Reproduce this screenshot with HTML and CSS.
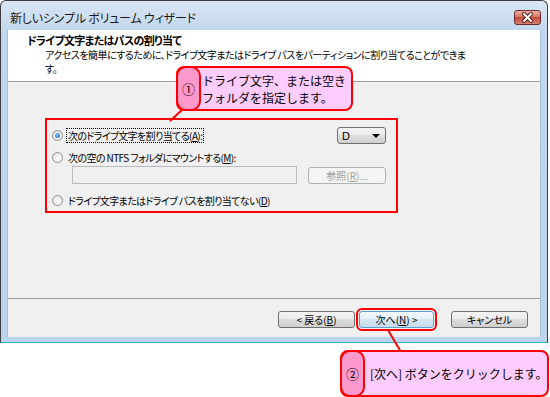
FILE: index.html
```html
<!DOCTYPE html>
<html lang="ja">
<head>
  <meta charset="UTF-8">
  <title>新しいシンプル ボリューム ウィザード</title>
  <link rel="stylesheet" href="styles.css">
</head>
<body>
  <div class="window">
    <div class="titlebar">
      <span class="title">新しいシンプル ボリューム ウィザード</span>
      <span class="close">
        <svg width="25" height="13" viewBox="0 0 25 13">
          <path d="M9 3 L16 10 M16 3 L9 10" stroke="#5a2020" stroke-width="4" stroke-linecap="round"/>
          <path d="M9 3 L16 10 M16 3 L9 10" stroke="#ffffff" stroke-width="2" stroke-linecap="round"/>
        </svg>
      </span>
    </div>
    <div class="client">
      <div class="header">
        <div class="h-title">ドライブ文字またはパスの割り当て</div>
        <div class="h-desc">アクセスを簡単にするために、ドライブ文字またはドライブ パスをパーティションに割り当てることができま<br>す。</div>
      </div>
      <div class="body">
        <div class="options">
          <div class="row row-a">
            <span class="radio on"></span>
            <span class="label focus">次のドライブ文字を割り当てる(<u>A</u>):</span>
            <span class="combo">D<span class="arrow"></span></span>
          </div>
          <div class="row row-b">
            <span class="radio"></span>
            <span class="label">次の空の NTFS フォルダにマウントする(<u>M</u>):</span>
          </div>
          <div class="row row-c">
            <span class="field"></span>
            <span class="btn disabled">参照(<u>R</u>)...</span>
          </div>
          <div class="row row-d">
            <span class="radio"></span>
            <span class="label">ドライブ文字またはドライブ パスを割り当てない(<u>D</u>)</span>
          </div>
        </div>
      </div>
      <div class="footer">
        <span class="btn back">&lt; 戻る(<u>B</u>)</span>
        <span class="btn next mark">次へ(<u>N</u>) &gt;</span>
        <span class="btn cancel">キャンセル</span>
      </div>
    </div>
  </div>

  <!-- annotations -->
  <svg class="pointers" width="550" height="397">
    <line x1="184" y1="108" x2="170" y2="121" stroke="#ff0000" stroke-width="2"/>
    <line x1="388" y1="330" x2="401" y2="352" stroke="#ff0000" stroke-width="2"/>
  </svg>
  <div class="callout c1">
    <span class="num">①</span>
    <span class="text">ドライブ文字、または空き<br>フォルダを指定します。</span>
  </div>
  <div class="callout c2">
    <span class="num">②</span>
    <span class="text">[次へ] ボタンをクリックします。</span>
  </div>
</body>
</html>
```

FILE: styles.css
```css
html, body {
  margin: 0;
  padding: 0;
  background: #ffffff;
  width: 550px;
  height: 397px;
  overflow: hidden;
  position: relative;
  font-family: "Noto Sans CJK JP", "Noto Sans", sans-serif;
  font-size: 10px;
  color: #000;
}
.window {
  width: 548px;
  height: 343px;
  box-sizing: border-box;
  border: 1px solid #3d3d3d;
  border-bottom-color: #2cb3d6;
  border-radius: 6px 6px 0 0;
  background: linear-gradient(#d9e6f4, #c2d7ee 30px, #bcd3ec);
  display: flex;
  flex-direction: column;
}
.titlebar {
  height: 29px;
  display: flex;
  justify-content: space-between;
  align-items: flex-start;
  padding: 0 6px 0 9px;
}
.title {
  font-size: 12px;
  line-height: 14px;
  margin-top: 10px;
  color: #1a1a1a;
  font-feature-settings: "palt";
  letter-spacing: -0.2px;
}
.close {
  margin-top: 9px;
  width: 27px;
  height: 15px;
  box-sizing: border-box;
  border: 1px solid #6b2b2b;
  border-radius: 3px;
  background: linear-gradient(#eab0a3, #d47766 45%, #c24a36 50%, #d9826e);
  display: flex;
  align-items: center;
  justify-content: center;
}
.client {
  margin: 0 6px;
  height: 307px;
  border-left: 1px solid #a9bfd6;
  border-right: 1px solid #a9bfd6;
  background: #f0f0f0;
  display: flex;
  flex-direction: column;
}
.header {
  height: 52px;
  box-sizing: border-box;
  background: #ffffff;
  border-bottom: 1px solid #a0a0a0;
  padding: 4px 0 0 19px;
}
.h-title {
  font-size: 11px;
  font-weight: bold;
  line-height: 13px;
  letter-spacing: -0.7px;
  font-feature-settings: "palt";
}
.h-desc {
  margin: 1px 0 0 18px;
  line-height: 14px;
  letter-spacing: -0.5px;
  font-feature-settings: "palt";
}
.body {
  height: 217px;
  box-sizing: border-box;
  border-bottom: 1px solid #a0a0a0;
  padding: 36px 0 0 37px;
}
.options {
  width: 353px;
  box-sizing: border-box;
  border: 2px solid #ff0000;
  padding: 7px 10px 4px 5px;
}
.row {
  display: flex;
  align-items: center;
  font-feature-settings: "palt";
  letter-spacing: -0.6px;
}
.row-a { height: 17px; }
.row-b { height: 14px; margin-top: 6px; }
.row-c { height: 18px; margin-top: 2px; padding-left: 20px; }
.row-d { height: 14px; margin-top: 9px; }
.radio {
  width: 11px;
  height: 11px;
  box-sizing: border-box;
  border: 1px solid #8e8f8f;
  border-radius: 50%;
  background: radial-gradient(circle at 60% 60%, #ffffff, #dcdcdc);
  margin-right: 4px;
  position: relative;
  flex: none;
}
.radio.on::after {
  content: "";
  position: absolute;
  left: 2px;
  top: 2px;
  width: 5px;
  height: 5px;
  border-radius: 50%;
  background: radial-gradient(circle at 40% 35%, #7cc4ff, #1f5fb5);
}
.label {
  line-height: 13px;
  padding: 0 1px;
}
.label.focus {
  outline: 1px dotted #000;
}
.combo {
  margin-left: auto;
  width: 49px;
  height: 17px;
  box-sizing: border-box;
  border: 1px solid #707070;
  border-radius: 3px;
  background: linear-gradient(#f4f4f4, #ebebeb 50%, #dddddd 50%, #d0d0d0);
  padding: 0 5px 0 4px;
  display: flex;
  align-items: center;
  justify-content: space-between;
  font-family: "Liberation Sans", sans-serif;
  font-size: 11px;
  letter-spacing: 0;
}
.arrow {
  width: 0;
  height: 0;
  border-left: 4px solid transparent;
  border-right: 4px solid transparent;
  border-top: 4px solid #000;
}
.field {
  width: 225px;
  height: 18px;
  box-sizing: border-box;
  border: 1px solid #b8bcc2;
  background: #f0f0f0;
}
.btn {
  height: 17px;
  box-sizing: border-box;
  border: 1px solid #707070;
  border-radius: 3px;
  background: linear-gradient(#f3f3f3, #ebebeb 50%, #dddddd 50%, #cfcfcf);
  display: flex;
  align-items: center;
  justify-content: center;
  font-feature-settings: "palt";
  flex: none;
}
.btn.disabled {
  margin-left: auto;
  width: 78px;
  border-color: #adb2b5;
  background: #f4f4f4;
  color: #9c9c9c;
  letter-spacing: 0;
}
.footer {
  flex: 1;
  display: flex;
  justify-content: flex-end;
  align-items: flex-start;
  padding: 12px 12px 0 0;
}
.back { width: 77px; }
.next {
  width: 75px;
  margin-left: 4px;
  border-color: #5d9fd0;
  background: linear-gradient(#f2f8fc, #e6f1f8 50%, #d5e6f2 50%, #c8dfee);
}
.cancel { width: 77px; margin-left: 17px; }
.mark {
  outline: 2px solid #ff0000;
  outline-offset: 1px;
}
.pointers {
  position: absolute;
  left: 0;
  top: 0;
  pointer-events: none;
}
.callout {
  position: absolute;
  box-sizing: border-box;
  border: 2px solid #ff0000;
  border-radius: 8px;
  background: #ffccff;
  display: flex;
  align-items: stretch;
  font-size: 12px;
  color: #000;
  white-space: nowrap;
}
.callout .num {
  margin: -2px 0 -2px -2px;
  width: 25px;
  flex: none;
  box-sizing: border-box;
  border: 2px solid #ff0000;
  border-radius: 10px;
  background: #ff99cc;
  display: flex;
  align-items: center;
  justify-content: center;
  font-size: 13px;
}
.callout .text {
  display: flex;
  align-items: center;
  line-height: 17px;
}
.c1 {
  left: 176px;
  top: 66px;
  width: 177px;
  height: 45px;
}
.c1 .text { padding-left: 1px; }
.c2 {
  left: 340px;
  top: 350px;
  width: 209px;
  height: 47px;
}
.c2 .text { padding-left: 5px; }
```
